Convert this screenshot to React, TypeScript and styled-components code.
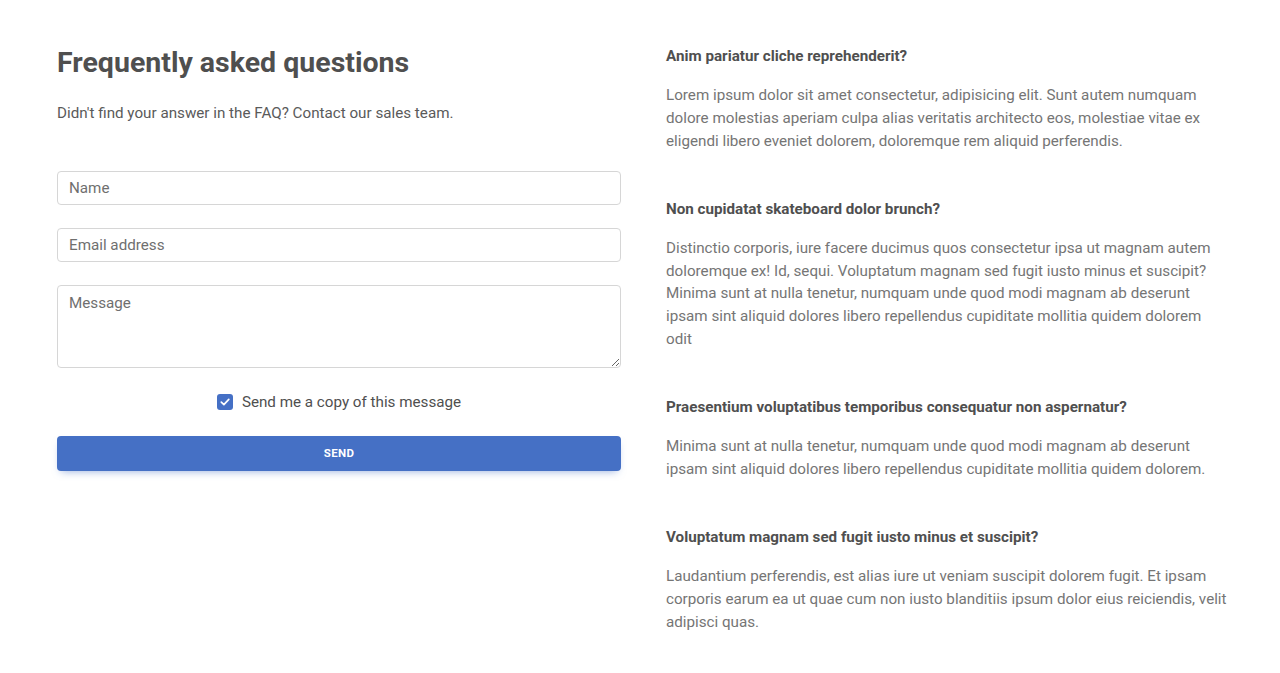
import React from "react";
import styled, { createGlobalStyle } from "styled-components";

const Global = createGlobalStyle`
  html, body { margin: 0; padding: 0; background: #fff; }
  body { font-family: Roboto, "Liberation Sans", Arial, sans-serif; color: #4f4f4f; }
  * { box-sizing: border-box; }
`;

const Page = styled.div`
  display: grid;
  grid-template-columns: 564px 562px;
  column-gap: 45px;
  padding: 45px 0 0 57px;
`;

const FormColumn = styled.section`
  display: flex;
  flex-direction: column;
`;

const Title = styled.h2`
  margin: 0;
  font-size: 28.5px;
  line-height: 35px;
  font-weight: 700;
  color: #4f4f4f;
`;

const Lead = styled.p`
  margin: 22px 0 0;
  font-size: 15.2px;
  line-height: 22.8px;
  color: #5a5a5a;
`;

const Form = styled.form`
  display: flex;
  flex-direction: column;
  gap: 23px;
  margin-top: 46px;
`;

const Field = styled.input`
  height: 34px;
  width: 100%;
  padding: 0 11px;
  border: 1px solid #d6d6d6;
  border-radius: 4px;
  font-family: inherit;
  font-size: 15.2px;
  color: #4f4f4f;
  outline: none;
  &::placeholder { color: #6f6f6f; }
`;

const Area = styled.textarea`
  height: 83px;
  width: 100%;
  padding: 6px 11px;
  border: 1px solid #d6d6d6;
  border-radius: 4px;
  font-family: inherit;
  font-size: 15.2px;
  line-height: 22px;
  color: #4f4f4f;
  resize: vertical;
  outline: none;
  &::placeholder { color: #6f6f6f; }
`;

const CheckRow = styled.label`
  display: flex;
  align-items: center;
  justify-content: center;
  gap: 9px;
  font-size: 15.2px;
  line-height: 22px;
  color: #4f4f4f;
`;

const Box = styled.span`
  width: 16px;
  height: 16px;
  border-radius: 3px;
  background: #4570c5;
  display: inline-flex;
  align-items: center;
  justify-content: center;
`;

const SendButton = styled.button`
  height: 35px;
  width: 100%;
  border: none;
  border-radius: 4px;
  background: #4570c5;
  color: #fff;
  font-family: inherit;
  font-size: 11.5px;
  font-weight: 700;
  letter-spacing: 0.3px;
  text-transform: uppercase;
  box-shadow: 0 4px 9px -4px rgba(69, 112, 197, 0.6);
  cursor: pointer;
`;

const FaqColumn = styled.section`
  display: flex;
  flex-direction: column;
  gap: 48.5px;
  padding-top: 3px;
`;

const Item = styled.article`
  display: flex;
  flex-direction: column;
  gap: 19px;
`;

const Question = styled.h6`
  margin: 0;
  font-size: 15.2px;
  line-height: 17px;
  font-weight: 700;
  color: #4f4f4f;
`;

const Answer = styled.p`
  margin: 0;
  font-size: 15.2px;
  line-height: 22.8px;
  color: #757575;
`;

const faqs = [
  {
    q: "Anim pariatur cliche reprehenderit?",
    a: "Lorem ipsum dolor sit amet consectetur, adipisicing elit. Sunt autem numquam dolore molestias aperiam culpa alias veritatis architecto eos, molestiae vitae ex eligendi libero eveniet dolorem, doloremque rem aliquid perferendis.",
  },
  {
    q: "Non cupidatat skateboard dolor brunch?",
    a: "Distinctio corporis, iure facere ducimus quos consectetur ipsa ut magnam autem doloremque ex! Id, sequi. Voluptatum magnam sed fugit iusto minus et suscipit? Minima sunt at nulla tenetur, numquam unde quod modi magnam ab deserunt ipsam sint aliquid dolores libero repellendus cupiditate mollitia quidem dolorem odit",
  },
  {
    q: "Praesentium voluptatibus temporibus consequatur non aspernatur?",
    a: "Minima sunt at nulla tenetur, numquam unde quod modi magnam ab deserunt ipsam sint aliquid dolores libero repellendus cupiditate mollitia quidem dolorem.",
  },
  {
    q: "Voluptatum magnam sed fugit iusto minus et suscipit?",
    a: "Laudantium perferendis, est alias iure ut veniam suscipit dolorem fugit. Et ipsam corporis earum ea ut quae cum non iusto blanditiis ipsum dolor eius reiciendis, velit adipisci quas.",
  },
];

export default function App() {
  return (
    <>
      <Global />
      <Page>
        <FormColumn>
          <Title>Frequently asked questions</Title>
          <Lead>Didn't find your answer in the FAQ? Contact our sales team.</Lead>
          <Form onSubmit={(e) => e.preventDefault()}>
            <Field type="text" placeholder="Name" />
            <Field type="email" placeholder="Email address" />
            <Area placeholder="Message" />
            <CheckRow>
              <Box>
                <svg width="12" height="12" viewBox="0 0 12 12">
                  <path d="M2.3 6.2 L4.9 8.7 L9.8 3.4" fill="none" stroke="#fff" strokeWidth="1.7" strokeLinecap="round" strokeLinejoin="round" />
                </svg>
              </Box>
              Send me a copy of this message
            </CheckRow>
            <SendButton type="submit">Send</SendButton>
          </Form>
        </FormColumn>
        <FaqColumn>
          {faqs.map((f) => (
            <Item key={f.q}>
              <Question>{f.q}</Question>
              <Answer>{f.a}</Answer>
            </Item>
          ))}
        </FaqColumn>
      </Page>
    </>
  );
}
